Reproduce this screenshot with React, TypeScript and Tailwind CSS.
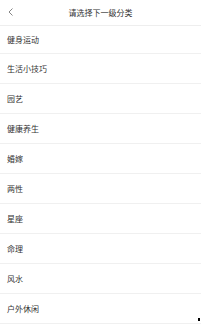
const categories = [
  '健身运动',
  '生活小技巧',
  '园艺',
  '健康养生',
  '婚嫁',
  '两性',
  '星座',
  '命理',
  '风水',
  '户外休闲',
]

export default function App() {
  return (
    <div
      className="relative w-[201px] h-[326px] overflow-hidden bg-white text-[#333333]"
      style={{ fontFamily: '"Noto Sans CJK SC", "Noto Sans", sans-serif' }}
    >
      <div className="relative flex items-center justify-center h-[26px] pt-[1px] border-b border-[#eeeeee]">
        <svg
          className="absolute left-[8px] top-[8px]"
          width="5"
          height="8"
          viewBox="0 0 5 8"
          fill="none"
        >
          <path d="M4.5 0.5 L1 4 L4.5 7.5" stroke="#666666" strokeWidth="0.8" />
        </svg>
        <span className="text-[8px] leading-none">请选择下一级分类</span>
      </div>

      {categories.map((name, i) => (
        <div
          key={name}
          className={`flex items-center ${i === 0 ? 'h-[28px]' : 'h-[30px]'} pl-[7px] border-b border-[#f0f0f0] text-[8px] leading-none`}
        >
          {name}
        </div>
      ))}

      <div className="absolute right-[1px] top-[318px] w-[2px] h-[3px] bg-black" />
    </div>
  )
}
